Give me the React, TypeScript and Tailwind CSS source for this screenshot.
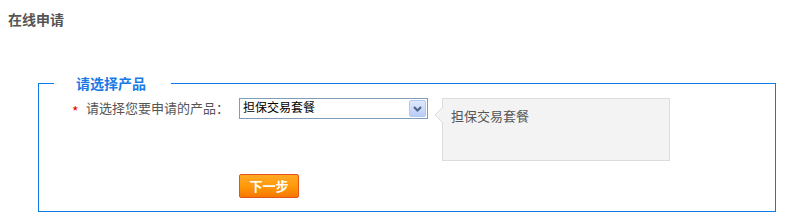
import { useState } from "react";

const font = { fontFamily: '"Noto Sans CJK SC", "Noto Sans", sans-serif' };

export default function App() {
  const [product, setProduct] = useState("担保交易套餐");

  return (
    <div className="w-[791px] h-[218px] bg-white pl-[8px] pt-[10px]" style={font}>
      {/* 标题 */}
      <h2 className="text-[14px] leading-[18px] font-bold text-[#555]">在线申请</h2>

      <fieldset className="mt-[45px] ml-[30px] mr-[15px] border border-[#0f7be8] pl-[15px] pb-[13px]">
        <legend className="pl-[22px] pr-[25px] text-[14px] leading-[20px] font-bold text-[#1a7ae6]">
          请选择产品
        </legend>

        <div className="flex items-start mt-[5px] pl-[18px]">
          <span className="w-[14px] pt-[6px] text-[14px] leading-[14px] text-[#e00]">*</span>
          <span className="w-[153px] text-[13px] leading-[20px] text-[#555]">请选择您要申请的产品：</span>

          {/* 下拉框 */}
          <div className="relative w-[189px] h-[21px] border border-[#7f9db9] bg-white">
            <select
              value={product}
              onChange={(e) => setProduct(e.target.value)}
              className="appearance-none block w-full h-[19px] pl-[3px] pb-[3px] text-[12px] leading-[16px] text-black bg-transparent outline-none"
            >
              <option>担保交易套餐</option>
              <option>即时到账套餐</option>
            </select>
            <div className="absolute right-[1px] top-[1px] w-[17px] h-[17px] rounded-[2px] border border-[#b4c8f6] bg-gradient-to-b from-[#dfe9fe] to-[#b8cdf8] flex items-center justify-center pointer-events-none">
              <svg width="9" height="6" viewBox="0 0 9 6">
                <path d="M1 1 L4.5 4.5 L8 1" stroke="#4d6185" strokeWidth="2" fill="none" />
              </svg>
            </div>
          </div>

          {/* 提示框 */}
          <div className="relative ml-[14px] w-[228px] h-[63px] border border-[#dcdcdc] bg-[#f3f3f3] pl-[8px] pt-[8px]">
            <svg className="absolute left-[-9px] top-[7px]" width="10" height="18" viewBox="0 0 10 18">
              <path d="M9.5 0.5 L1 9 L9.5 17.5" fill="#f3f3f3" stroke="#dcdcdc" strokeWidth="1" />
            </svg>
            <span className="block text-[13px] leading-[18px] text-[#555]">{product}</span>
          </div>
        </div>

        <div className="pl-[185px] mt-[11px]">
          <button className="w-[60px] h-[24px] rounded-[2px] border border-[#e4531a] bg-gradient-to-b from-[#ffa822] via-[#ff9a0a] to-[#f57700] text-white text-[13px] font-bold leading-[22px]">
            下一步
          </button>
        </div>
      </fieldset>
    </div>
  );
}
